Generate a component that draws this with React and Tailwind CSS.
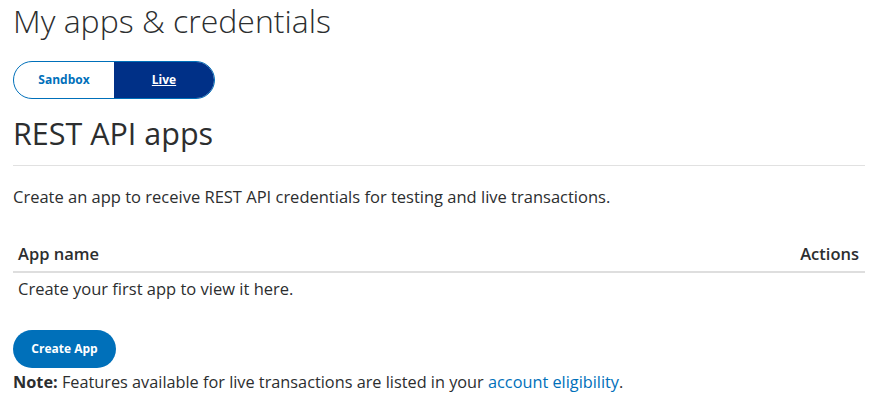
import React, { useState } from 'react';

export default function App() {
    const [mode, setMode] = useState('live');

    return (
        <div className="min-h-screen bg-white text-[#2c2e2f] font-['Open_Sans','Lato',sans-serif]">
            <div className="px-[13px] w-[878px]">
                <h1 className="text-[32px] leading-[40px] font-light pt-[1px]">My apps &amp; credentials</h1>

                {/* Sandbox / Live toggle */}
                <div className="mt-[20px] flex w-[202px] h-[38px] rounded-full border border-[#0070ba] overflow-hidden">
                    <button
                        onClick={() => setMode('sandbox')}
                        className={`w-[100px] text-[12px] font-bold ${mode === 'sandbox' ? 'bg-[#003087] text-white underline' : 'text-[#0070ba]'}`}
                    >
                        Sandbox
                    </button>
                    <button
                        onClick={() => setMode('live')}
                        className={`flex-1 text-[12px] font-bold ${mode === 'live' ? 'bg-[#003087] text-white underline' : 'text-[#0070ba]'}`}
                    >
                        Live
                    </button>
                </div>

                <h2 className="mt-[14px] text-[30.5px] leading-[40px] font-normal">REST API apps</h2>
                <div className="mt-[12px] border-t border-[#e1e1e1]" />

                <p className="mt-[19px] text-[16.5px] leading-[24px]">
                    Create an app to receive REST API credentials for testing and live transactions.
                </p>

                {/* Apps table */}
                <table className="mt-[28px] w-full text-[16.5px]">
                    <thead>
                        <tr className="border-b-2 border-[#dedede]">
                            <th className="pl-[5px] h-[35px] text-left font-semibold">App name</th>
                            <th className="pr-[6px] h-[35px] text-right font-semibold">Actions</th>
                        </tr>
                    </thead>
                    <tbody>
                        <tr>
                            <td colSpan="2" className="px-[5px] h-[34px]">Create your first app to view it here.</td>
                        </tr>
                    </tbody>
                </table>

                <button className="mt-[24px] w-[103px] h-[38px] rounded-full bg-[#0070ba] text-white text-[12px] font-bold">
                    Create App
                </button>

                <p className="text-[16.3px] leading-[24px] mt-[2px]">
                    <span className="font-bold">Note:</span> Features available for live transactions are listed in your{' '}
                    <a href="#" className="text-[#0070ba]">account eligibility</a>.
                </p>
            </div>
        </div>
    );
}
